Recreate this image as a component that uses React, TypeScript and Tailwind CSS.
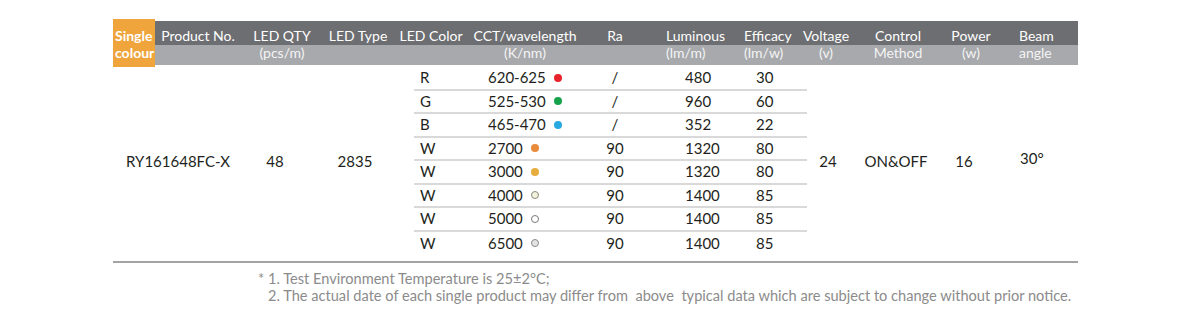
import React from "react";

type Row = { c: string; cct: string; dot: string; ra: string; lum: string; eff: string };

const rows: Row[] = [
  { c: "R", cct: "620-625", dot: "bg-[#e8232b]", ra: "/", lum: "480", eff: "30" },
  { c: "G", cct: "525-530", dot: "bg-[#15a24a]", ra: "/", lum: "960", eff: "60" },
  { c: "B", cct: "465-470", dot: "bg-[#28a9e1]", ra: "/", lum: "352", eff: "22" },
  { c: "W", cct: "2700", dot: "bg-[#ea8a3b]", ra: "90", lum: "1320", eff: "80" },
  { c: "W", cct: "3000", dot: "bg-[#e6ad3e]", ra: "90", lum: "1320", eff: "80" },
  { c: "W", cct: "4000", dot: "bg-[#f1f1dc] border border-[#8a8a7a]", ra: "90", lum: "1400", eff: "85" },
  { c: "W", cct: "5000", dot: "bg-white border border-[#7a7a7a]", ra: "90", lum: "1400", eff: "85" },
  { c: "W", cct: "6500", dot: "bg-[#e4e4e4] border border-[#8a8a8a]", ra: "90", lum: "1400", eff: "85" },
];

function H({ w, a, b, cls = "items-center" }: { w: string; a: string; b?: string; cls?: string }) {
  return (
    <div className={`flex flex-col ${w} ${cls} pt-[6px] leading-[17px] whitespace-nowrap`}>
      <span className="h-[17px] text-white">{a}</span>
      <span className="h-[17px] text-[#f4f4f4]">{b ?? ""}</span>
    </div>
  );
}

export default function App() {
  return (
    <div className="w-[1190px] h-[335px] bg-white [font-family:Lato,'Liberation_Sans',sans-serif] text-[#231f20] overflow-hidden">
      <div className="ml-[113px] w-[965px] pt-[19px]">
        {/* header */}
        <div className="flex h-[48px] text-[14px]">
          <div className="w-[42px] h-[48px] bg-[#efa43c] text-white font-bold leading-[17px] pt-[8px] pl-[2px]">
            <div>Single</div>
            <div>colour</div>
          </div>
          <div className="flex-1 mt-[2px] h-[44px] flex bg-[linear-gradient(to_bottom,#6d6e71_24px,#a7a9ac_24px)]">
            <H w="w-[86px]" a="Product No." />
            <H w="w-[82px]" a="LED QTY" b="(pcs/m)" />
            <H w="w-[70px]" a="LED Type" />
            <H w="w-[76px]" a="LED Color" />
            <H w="w-[112px]" a="CCT/wavelength" b="(K/nm)" />
            <H w="w-[68px]" a="Ra" />
            <H w="w-[91px]" a="Luminous" b="(lm/m)" cls="items-start pl-[17px]" />
            <H w="w-[57px]" a="Efficacy" b="(lm/w)" cls="items-start pl-[4px]" />
            <H w="w-[58px]" a="Voltage" b="(v)" />
            <H w="w-[86px]" a="Control" b="Method" />
            <H w="w-[60px]" a="Power" b="(w)" />
            <H w="w-[77px]" a="Beam" b="angle" cls="items-start pl-[18px]" />
          </div>
        </div>

        {/* body */}
        <div className="flex h-[188px] text-[15px]">
          <div className="w-[130px] flex items-center justify-center">RY161648FC-X</div>
          <div className="w-[64px] flex items-center justify-center">48</div>
          <div className="w-[96px] flex items-center justify-center">2835</div>
          <div className="w-[11px]" />
          <div className="w-[393px] flex flex-col">
            {rows.map((r, i) => (
              <div
                key={i}
                className={`flex items-center h-[23.5px] leading-none ${i < rows.length - 1 ? "border-b-2 border-[#d9d9d9]" : ""}`}
              >
                <div className="w-[66px] pl-[6px]">{r.c}</div>
                <div className="w-[110px] pl-[8px] flex items-center">
                  <span>{r.cct}</span>
                  <span className={`ml-[8px] inline-block w-[8px] h-[8px] rounded-full ${r.dot}`} />
                </div>
                <div className="w-[50px] text-center">{r.ra}</div>
                <div className="w-[90px] pl-[45px]">{r.lum}</div>
                <div className="w-[77px] pl-[26px]">{r.eff}</div>
              </div>
            ))}
          </div>
          <div className="w-[42px] flex items-center justify-center">24</div>
          <div className="w-[94px] flex items-center justify-center">ON&amp;OFF</div>
          <div className="w-[42px] flex items-center justify-center">16</div>
          <div className="w-[93px] flex items-center pl-[35px] pb-[6px]">30°</div>
        </div>

        <div className="mt-[6px] h-[2px] bg-[#a3a3a3]" />

        <div className="pt-[7px] pl-[145px] text-[14.6px] leading-[17px] text-[#8b8b8b] whitespace-pre">
          <div>* 1. Test Environment Temperature is 25±2°C;</div>
          <div className="pl-[10px]">2. The actual date of each single product may differ from  above  typical data which are subject to change without prior notice.</div>
        </div>
      </div>
    </div>
  );
}
